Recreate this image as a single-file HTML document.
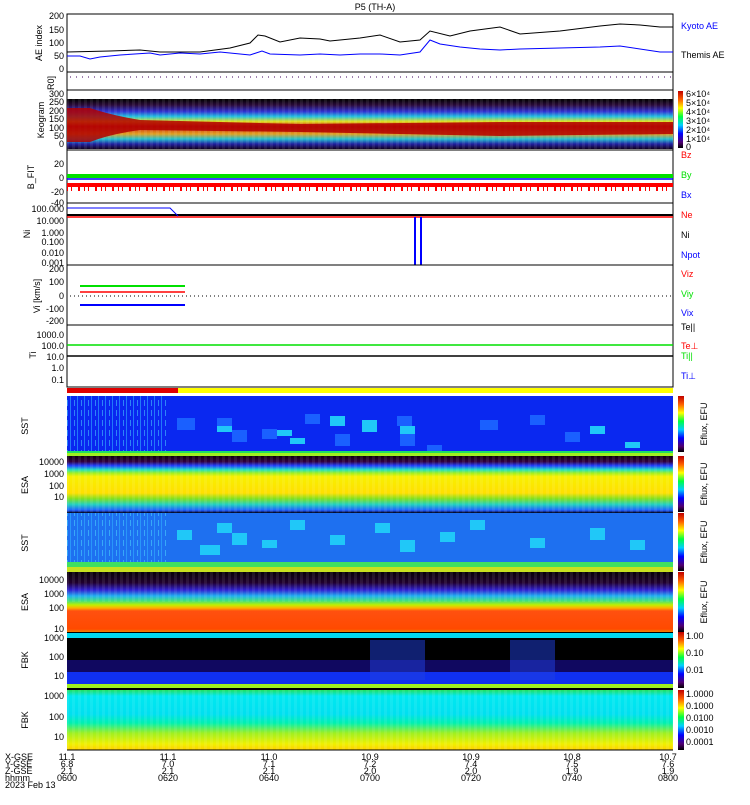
<!DOCTYPE html>
<html><head><meta charset="utf-8"><style>
body{margin:0;background:#fff;width:750px;height:800px;overflow:hidden;font-family:"Liberation Sans",sans-serif}
svg text{font-family:"Liberation Sans",sans-serif;font-size:9px}
</style></head><body>
<svg width="750" height="800" xmlns="http://www.w3.org/2000/svg">
<defs>
<linearGradient id="keo" x1="0" y1="0" x2="0" y2="1">
<stop offset="0" stop-color="#000"/><stop offset="0.12" stop-color="#2a0a3a"/><stop offset="0.25" stop-color="#3030d0"/><stop offset="0.35" stop-color="#20c0e0"/><stop offset="0.45" stop-color="#e0e020"/><stop offset="0.55" stop-color="#d02010"/><stop offset="0.7" stop-color="#e0a020"/><stop offset="0.8" stop-color="#20c0d0"/><stop offset="0.9" stop-color="#2020a0"/><stop offset="1" stop-color="#100020"/>
</linearGradient>
<linearGradient id="cb" x1="0" y1="1" x2="0" y2="0">
<stop offset="0" stop-color="#000"/><stop offset="0.1" stop-color="#500070"/><stop offset="0.25" stop-color="#0000ff"/><stop offset="0.4" stop-color="#00d0ff"/><stop offset="0.55" stop-color="#00ff40"/><stop offset="0.7" stop-color="#ffff00"/><stop offset="0.85" stop-color="#ff6000"/><stop offset="1" stop-color="#c00000"/>
</linearGradient>
<linearGradient id="esai" x1="0" y1="0" x2="0" y2="1">
<stop offset="0" stop-color="#100010"/><stop offset="0.1" stop-color="#300040"/><stop offset="0.17" stop-color="#2040ff"/><stop offset="0.24" stop-color="#20e0c0"/><stop offset="0.3" stop-color="#a0f020"/><stop offset="0.36" stop-color="#f8f000"/><stop offset="0.65" stop-color="#ffe000"/><stop offset="0.75" stop-color="#80e020"/><stop offset="0.85" stop-color="#20d0c0"/><stop offset="0.95" stop-color="#2060ff"/><stop offset="1" stop-color="#000030"/>
</linearGradient>
<linearGradient id="esae" x1="0" y1="0" x2="0" y2="1">
<stop offset="0" stop-color="#080008"/><stop offset="0.18" stop-color="#200030"/><stop offset="0.3" stop-color="#3020d0"/><stop offset="0.4" stop-color="#20b0f0"/><stop offset="0.48" stop-color="#40e080"/><stop offset="0.55" stop-color="#c0f000"/><stop offset="0.6" stop-color="#ffb000"/><stop offset="0.65" stop-color="#ff5010"/><stop offset="0.95" stop-color="#ff4a00"/><stop offset="1" stop-color="#f08000"/>
</linearGradient>
<linearGradient id="scm" x1="0" y1="0" x2="0" y2="1">
<stop offset="0" stop-color="#20e060"/><stop offset="0.1" stop-color="#00e8f0"/><stop offset="0.4" stop-color="#00e0f0"/><stop offset="0.55" stop-color="#00f0b0"/><stop offset="0.72" stop-color="#a0f020"/><stop offset="0.9" stop-color="#f0f000"/><stop offset="1" stop-color="#ffd000"/>
</linearGradient>
<pattern id="noise" width="6" height="4" patternUnits="userSpaceOnUse"><rect width="3" height="4" fill="#fff" opacity="0.08"/></pattern>
<pattern id="streak" width="7" height="10" patternUnits="userSpaceOnUse"><rect width="1" height="10" fill="#30b0ff" opacity="0.6"/><rect x="4" width="1" height="6" fill="#50e0ff" opacity="0.5"/></pattern>
</defs>

<text x="375" y="10" text-anchor="middle" font-size="10">P5 (TH-A)</text>

<!-- AE panel -->
<rect x="67" y="14" width="606" height="58" fill="none" stroke="#000"/>
<polyline fill="none" stroke="#000" points="67,52 110,51 140,50 160,52 200,52 230,48 250,43 258,35 265,36 280,42 300,38 320,39 330,41 360,38 380,35 400,42 420,40 430,31 450,36 470,31 500,27 520,34 560,31 600,26 620,24 640,25 660,27 673,27"/>
<polyline fill="none" stroke="#0000ff" points="67,56 80,56 90,59 100,57 120,55 150,53 160,55 180,53 200,54 220,52 250,55 262,51 270,54 300,55 320,54 340,55 360,54 380,54 400,55 420,52 430,40 440,44 460,47 480,49 500,50 520,49 560,48 600,47 620,46 660,52 673,52"/>
<text transform="translate(42,43) rotate(-90)" text-anchor="middle">AE index</text>
<g text-anchor="end"><text x="64" y="19">200</text><text x="64" y="33">150</text><text x="64" y="46">100</text><text x="64" y="59">50</text><text x="64" y="72">0</text></g>
<text x="681" y="29" fill="#0000ff">Kyoto AE</text>
<text x="681" y="58">Themis AE</text>

<!-- R0 -->
<rect x="67" y="72" width="606" height="18" fill="none" stroke="#000"/>
<line x1="70" y1="77" x2="673" y2="77" stroke="#400060" stroke-dasharray="1,5"/>
<text transform="translate(54,83) rotate(-90)" text-anchor="middle" font-size="8">R0]</text>

<!-- Keogram -->
<rect x="67" y="90" width="606" height="60" fill="none" stroke="#000"/>
<rect x="67" y="99" width="606" height="50" fill="url(#keo)"/>
<rect x="67" y="99" width="606" height="50" fill="url(#noise)"/>
<path d="M67,108 L90,108 Q110,115 140,120 L300,124 L500,122 L673,122 L673,134 L500,136 L300,132 L140,130 Q110,134 90,142 L67,142Z" fill="#b00000" opacity="0.85"/>
<text transform="translate(44,120) rotate(-90)" text-anchor="middle">Keogram</text>
<g text-anchor="end" font-size="8"><text x="64" y="97">300</text><text x="64" y="105">250</text><text x="64" y="114">200</text><text x="64" y="122">150</text><text x="64" y="131">100</text><text x="64" y="139">50</text><text x="64" y="147">0</text></g>
<rect x="678" y="91" width="5" height="57" fill="url(#cb)"/>
<g font-size="8"><text x="686" y="97">6×10⁴</text><text x="686" y="106">5×10⁴</text><text x="686" y="115">4×10⁴</text><text x="686" y="124">3×10⁴</text><text x="686" y="133">2×10⁴</text><text x="686" y="142">1×10⁴</text><text x="686" y="150">0</text></g>

<!-- B -->
<rect x="67" y="150" width="606" height="53" fill="none" stroke="#000"/>
<path d="M67,176 l606,0" stroke="#00e000" stroke-width="4"/>
<path d="M67,179 l606,0" stroke="#0000ff" stroke-width="1.5"/>
<path d="M67,185 l606,0" stroke="#ff0000" stroke-width="4"/>
<path d="M67,189 l606,0" stroke="#ff0000" stroke-width="4" stroke-dasharray="1,3,1,6,2,4"/>
<text transform="translate(34,177) rotate(-90)" text-anchor="middle" font-size="8">B_FIT</text>
<g text-anchor="end" font-size="8"><text x="64" y="167">20</text><text x="64" y="181">0</text><text x="64" y="195">-20</text><text x="64" y="206">-40</text></g>
<text x="681" y="158" fill="#ff0000">Bz</text><text x="681" y="178" fill="#00e000">By</text><text x="681" y="198" fill="#0000ff">Bx</text>

<!-- Ni -->
<rect x="67" y="203" width="606" height="62" fill="none" stroke="#000"/>
<line x1="67" y1="215" x2="673" y2="215" stroke="#000" stroke-width="2"/>
<line x1="67" y1="217" x2="673" y2="217" stroke="#ff0000" stroke-width="1.5"/>
<polyline fill="none" stroke="#0000ff" points="67,208 170,208 178,216"/>
<rect x="414" y="217" width="2" height="48" fill="#0000ff"/><rect x="420" y="217" width="2" height="48" fill="#0000ff"/>
<text transform="translate(30,234) rotate(-90)" text-anchor="middle" font-size="8">Ni</text>
<g text-anchor="end" font-size="8"><text x="64" y="212">100.000</text><text x="64" y="224">10.000</text><text x="64" y="236">1.000</text><text x="64" y="245">0.100</text><text x="64" y="256">0.010</text><text x="64" y="266">0.001</text></g>
<text x="681" y="218" fill="#ff0000">Ne</text><text x="681" y="238">Ni</text><text x="681" y="258" fill="#0000ff">Npot</text>

<!-- Vi -->
<rect x="67" y="265" width="606" height="60" fill="none" stroke="#000"/>
<line x1="70" y1="296" x2="673" y2="296" stroke="#000" stroke-dasharray="1,3"/>
<line x1="80" y1="286" x2="185" y2="286" stroke="#00e000" stroke-width="2"/>
<line x1="80" y1="292" x2="185" y2="292" stroke="#ff0000" stroke-width="1.5"/>
<line x1="80" y1="305" x2="185" y2="305" stroke="#0000ff" stroke-width="2"/>
<text transform="translate(40,296) rotate(-90)" text-anchor="middle" font-size="8">Vi [km/s]</text>
<g text-anchor="end" font-size="8"><text x="64" y="272">200</text><text x="64" y="285">100</text><text x="64" y="299">0</text><text x="64" y="312">-100</text><text x="64" y="324">-200</text></g>
<text x="681" y="277" fill="#ff0000">Viz</text><text x="681" y="297" fill="#00e000">Viy</text><text x="681" y="316" fill="#0000ff">Vix</text>

<!-- Ti -->
<rect x="67" y="325" width="606" height="62" fill="none" stroke="#000"/>
<line x1="67" y1="345" x2="673" y2="345" stroke="#00e000" stroke-width="1.5"/>
<line x1="67" y1="356" x2="673" y2="356" stroke="#000" stroke-width="1.5"/>
<text transform="translate(36,355) rotate(-90)" text-anchor="middle" font-size="8">Ti</text>
<g text-anchor="end" font-size="8"><text x="64" y="338">1000.0</text><text x="64" y="349">100.0</text><text x="64" y="360">10.0</text><text x="64" y="371">1.0</text><text x="64" y="383">0.1</text></g>
<text x="681" y="330">Te||</text><text x="681" y="349" fill="#ff0000">Te⊥</text><text x="681" y="359" fill="#00e000">Ti||</text><text x="681" y="379" fill="#0000ff">Ti⊥</text>

<!-- bar -->
<rect x="67" y="388" width="111" height="5" fill="#e00000"/><rect x="178" y="388" width="495" height="5" fill="#ffff00"/>

<!-- SST ion -->
<rect x="67" y="396" width="606" height="60" fill="#0a28f0"/>
<rect x="67" y="396" width="100" height="56" fill="url(#streak)"/>
<g fill="#1a60ff">
<rect x="177" y="418" width="18" height="12"/><rect x="217" y="418" width="15" height="8"/><rect x="232" y="430" width="15" height="12"/><rect x="262" y="429" width="15" height="10"/><rect x="305" y="414" width="15" height="10"/><rect x="335" y="434" width="15" height="12"/><rect x="400" y="434" width="15" height="12"/><rect x="397" y="416" width="15" height="10"/><rect x="427" y="445" width="15" height="6"/><rect x="480" y="420" width="18" height="10"/><rect x="530" y="415" width="15" height="10"/><rect x="565" y="432" width="15" height="10"/>
</g>
<g fill="#20c8f8">
<rect x="217" y="426" width="15" height="6"/><rect x="277" y="430" width="15" height="6"/><rect x="290" y="438" width="15" height="6"/><rect x="330" y="416" width="15" height="10"/><rect x="362" y="420" width="15" height="12"/><rect x="400" y="426" width="15" height="8"/><rect x="590" y="426" width="15" height="8"/><rect x="625" y="442" width="15" height="6"/>
</g>
<rect x="67" y="451" width="606" height="2" fill="#20e060"/><rect x="67" y="453" width="606" height="3" fill="#a0f020"/>
<text transform="translate(28,426) rotate(-90)" text-anchor="middle" font-size="8">SST</text>
<rect x="678" y="396" width="6" height="56" fill="url(#cb)"/>
<text transform="translate(707,424) rotate(-90)" text-anchor="middle" font-size="8">Eflux, EFU</text>

<!-- ESA ion -->
<rect x="67" y="456" width="606" height="57" fill="url(#esai)"/>
<rect x="67" y="456" width="606" height="57" fill="url(#noise)"/>
<text transform="translate(28,485) rotate(-90)" text-anchor="middle" font-size="8">ESA</text>
<g text-anchor="end" font-size="8"><text x="64" y="465">10000</text><text x="64" y="477">1000</text><text x="64" y="489">100</text><text x="64" y="500">10</text></g>
<rect x="678" y="456" width="6" height="56" fill="url(#cb)"/>
<text transform="translate(707,484) rotate(-90)" text-anchor="middle" font-size="8">Eflux, EFU</text>
<line x1="67" y1="513" x2="673" y2="513" stroke="#000"/>

<!-- SST e -->
<rect x="67" y="513" width="606" height="59" fill="#1e70f0"/>
<rect x="67" y="513" width="100" height="50" fill="url(#streak)"/>
<g fill="#20c8f8">
<rect x="177" y="530" width="15" height="10"/><rect x="217" y="523" width="15" height="10"/><rect x="232" y="533" width="15" height="12"/><rect x="262" y="540" width="15" height="8"/><rect x="290" y="520" width="15" height="10"/><rect x="330" y="535" width="15" height="10"/><rect x="375" y="523" width="15" height="10"/><rect x="400" y="540" width="15" height="12"/><rect x="440" y="532" width="15" height="10"/><rect x="470" y="520" width="15" height="10"/><rect x="530" y="538" width="15" height="10"/><rect x="590" y="528" width="15" height="12"/><rect x="630" y="540" width="15" height="10"/><rect x="200" y="545" width="20" height="10"/>
</g>
<rect x="67" y="562" width="606" height="5" fill="#40e060"/><rect x="67" y="567" width="606" height="5" fill="#c8e020"/>
<text transform="translate(28,543) rotate(-90)" text-anchor="middle" font-size="8">SST</text>
<rect x="678" y="513" width="6" height="58" fill="url(#cb)"/>
<text transform="translate(707,542) rotate(-90)" text-anchor="middle" font-size="8">Eflux, EFU</text>

<!-- ESA e -->
<rect x="67" y="572" width="606" height="60" fill="url(#esae)"/>
<rect x="67" y="572" width="606" height="30" fill="url(#noise)"/>
<text transform="translate(28,602) rotate(-90)" text-anchor="middle" font-size="8">ESA</text>
<g text-anchor="end" font-size="8"><text x="64" y="583">10000</text><text x="64" y="597">1000</text><text x="64" y="611">100</text><text x="64" y="632">10</text></g>
<rect x="678" y="572" width="6" height="60" fill="url(#cb)"/>
<text transform="translate(707,602) rotate(-90)" text-anchor="middle" font-size="8">Eflux, EFU</text>

<!-- FBK edc -->
<rect x="67" y="632" width="606" height="56" fill="#000"/>
<rect x="67" y="633" width="606" height="5" fill="#00d8f0"/>
<rect x="67" y="660" width="606" height="12" fill="#2010c0" opacity="0.5"/>
<rect x="67" y="672" width="606" height="12" fill="#1030f0"/>
<rect x="67" y="684" width="606" height="4" fill="#a0f020"/>
<rect x="370" y="640" width="55" height="40" fill="#2040e0" opacity="0.5"/><rect x="510" y="640" width="45" height="40" fill="#2040e0" opacity="0.5"/>
<text transform="translate(28,660) rotate(-90)" text-anchor="middle" font-size="8">FBK</text>
<g text-anchor="end" font-size="8"><text x="64" y="641">1000</text><text x="64" y="660">100</text><text x="64" y="679">10</text></g>
<rect x="678" y="632" width="6" height="56" fill="url(#cb)"/>
<g font-size="8"><text x="686" y="639">1.00</text><text x="686" y="656">0.10</text><text x="686" y="673">0.01</text></g>
<line x1="67" y1="689" x2="673" y2="689" stroke="#000" stroke-width="2"/>

<!-- FBK scm -->
<rect x="67" y="690" width="606" height="60" fill="url(#scm)"/>
<rect x="67" y="690" width="606" height="60" fill="url(#noise)"/>
<text transform="translate(28,720) rotate(-90)" text-anchor="middle" font-size="8">FBK</text>
<g text-anchor="end" font-size="8"><text x="64" y="699">1000</text><text x="64" y="720">100</text><text x="64" y="740">10</text></g>
<rect x="678" y="690" width="6" height="60" fill="url(#cb)"/>
<g font-size="8"><text x="686" y="697">1.0000</text><text x="686" y="709">0.1000</text><text x="686" y="721">0.0100</text><text x="686" y="733">0.0010</text><text x="686" y="745">0.0001</text></g>

<line x1="67" y1="750" x2="673" y2="750" stroke="#000"/>

<!-- axis labels -->
<g font-size="8">
<text x="5" y="760">X-GSE</text><text x="5" y="767">Y-GSE</text><text x="5" y="774">Z-GSE</text><text x="5" y="781">hhmm</text><text x="5" y="788">2023 Feb 13</text>
</g>
<g font-size="8" text-anchor="middle">
<text x="67" y="760">11.1</text><text x="67" y="767">6.8</text><text x="67" y="774">2.1</text><text x="67" y="781">0600</text>
<text x="168" y="760">11.1</text><text x="168" y="767">7.0</text><text x="168" y="774">2.1</text><text x="168" y="781">0620</text>
<text x="269" y="760">11.0</text><text x="269" y="767">7.1</text><text x="269" y="774">2.1</text><text x="269" y="781">0640</text>
<text x="370" y="760">10.9</text><text x="370" y="767">7.2</text><text x="370" y="774">2.0</text><text x="370" y="781">0700</text>
<text x="471" y="760">10.9</text><text x="471" y="767">7.4</text><text x="471" y="774">2.0</text><text x="471" y="781">0720</text>
<text x="572" y="760">10.8</text><text x="572" y="767">7.5</text><text x="572" y="774">1.9</text><text x="572" y="781">0740</text>
<text x="668" y="760">10.7</text><text x="668" y="767">7.6</text><text x="668" y="774">1.9</text><text x="668" y="781">0800</text>
</g>
</svg>
</body></html>
